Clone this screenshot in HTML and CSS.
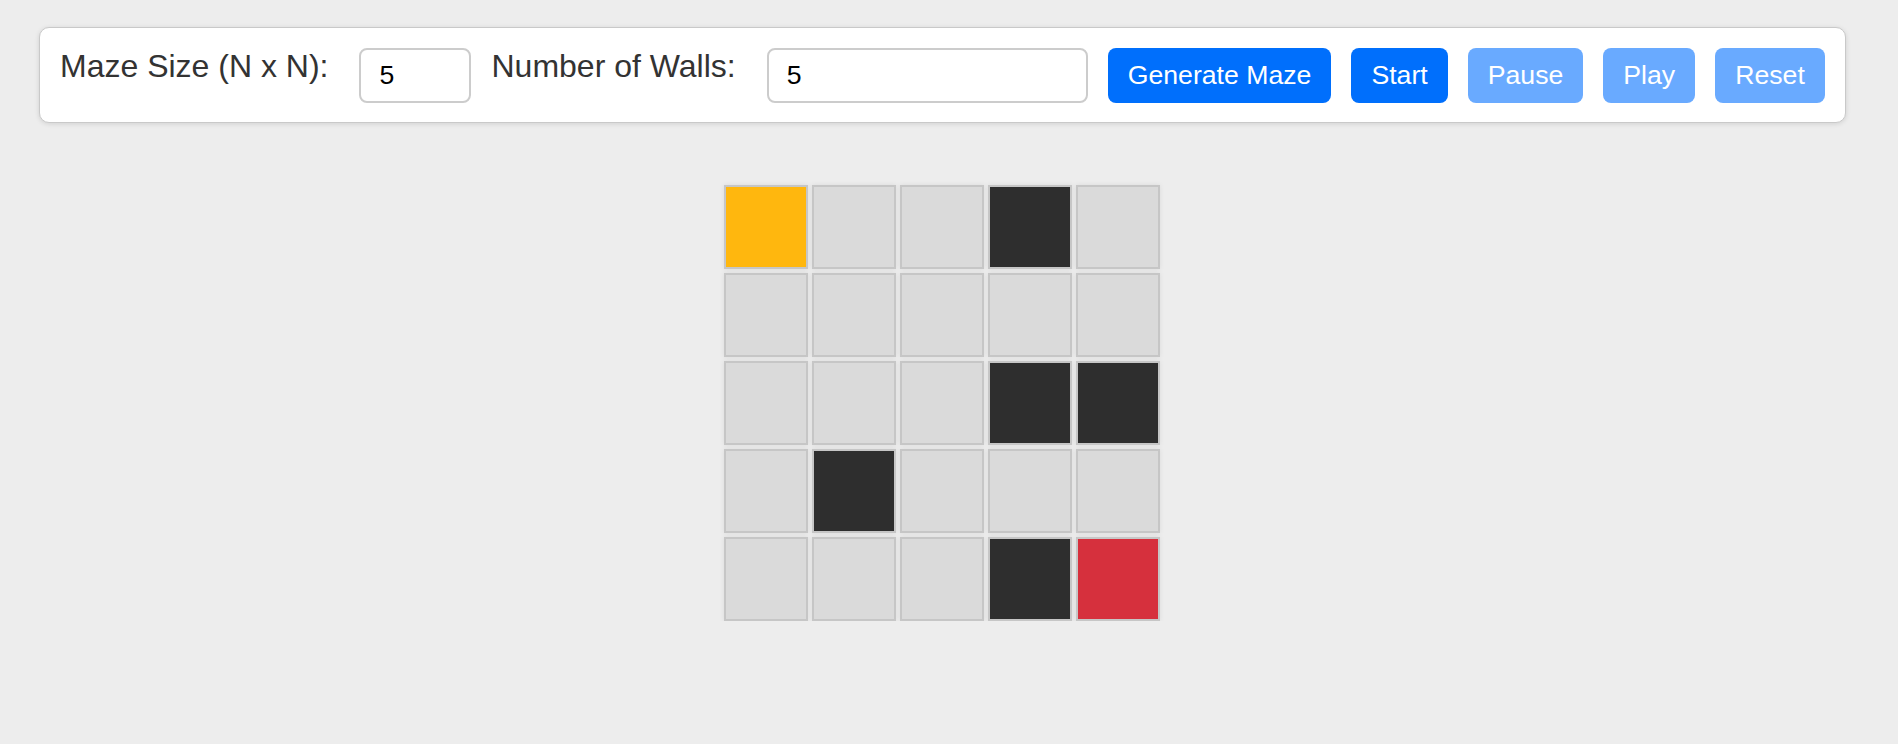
FILE: index.html
```html
<!DOCTYPE html>
<html lang="en">
<head>
<meta charset="utf-8">
<title>Maze</title>
<link rel="stylesheet" href="styles.css">
</head>
<body>
<div class="page">
  <div class="controls">
    <label class="label">Maze Size (N x N):</label>
    <input class="input input-size" type="number" value="5">
    <label class="label">Number of Walls:</label>
    <input class="input input-walls" type="number" value="5">
    <button class="btn">Generate Maze</button>
    <button class="btn">Start</button>
    <button class="btn btn-disabled">Pause</button>
    <button class="btn btn-disabled">Play</button>
    <button class="btn btn-disabled">Reset</button>
  </div>
  <div class="maze">
    <div class="cell start"></div><div class="cell"></div><div class="cell"></div><div class="cell wall"></div><div class="cell"></div>
    <div class="cell"></div><div class="cell"></div><div class="cell"></div><div class="cell"></div><div class="cell"></div>
    <div class="cell"></div><div class="cell"></div><div class="cell"></div><div class="cell wall"></div><div class="cell wall"></div>
    <div class="cell"></div><div class="cell wall"></div><div class="cell"></div><div class="cell"></div><div class="cell"></div>
    <div class="cell"></div><div class="cell"></div><div class="cell"></div><div class="cell wall"></div><div class="cell end"></div>
  </div>
</div>
</body>
</html>
```
FILE: styles.css
```css
html, body {
  margin: 0;
  padding: 0;
  background: #ededed;
  font-family: "Liberation Sans", Arial, sans-serif;
}
.page {
  display: inline-flex;
  flex-direction: column;
  align-items: center;
  margin: 27px 0 0 39px;
}
.controls {
  display: flex;
  align-items: flex-start;
  gap: 20px;
  padding: 20px 20px 19px;
  background: #ffffff;
  border: 1px solid #c9c9c9;
  border-radius: 10px;
  box-shadow: 0 1px 5px rgba(0, 0, 0, 0.12);
}
.label {
  font-size: 32px;
  line-height: 36px;
  color: #333333;
  margin-right: 11px;
}
.input {
  box-sizing: border-box;
  height: 55px;
  padding: 0 18px;
  border: 2px solid #cccccc;
  border-radius: 8px;
  font-family: "Liberation Sans", Arial, sans-serif;
  font-size: 26.67px;
  color: #000000;
  background: #ffffff;
  -moz-appearance: textfield;
}
.input::-webkit-inner-spin-button,
.input::-webkit-outer-spin-button {
  -webkit-appearance: none;
  margin: 0;
}
.input-size { width: 112px; }
.input-walls { width: 321px; }
.btn {
  box-sizing: border-box;
  height: 55px;
  padding: 0 20px;
  border: none;
  border-radius: 8px;
  background: #006ffc;
  color: #ffffff;
  font-family: "Liberation Sans", Arial, sans-serif;
  font-size: 26.67px;
}
.btn-disabled {
  background: #69aaff;
}
.maze {
  display: grid;
  grid-template-columns: repeat(5, 84px);
  grid-auto-rows: 84px;
  gap: 4px;
  margin-top: 62px;
}
.cell {
  box-sizing: border-box;
  background: #dadada;
  border: 2px solid #c6c6c6;
  box-shadow: 0 0 5px rgba(0, 0, 0, 0.08);
}
.cell.wall { background: #2e2e2e; }
.cell.start { background: #ffb70e; }
.cell.end { background: #d6303d; }
```
